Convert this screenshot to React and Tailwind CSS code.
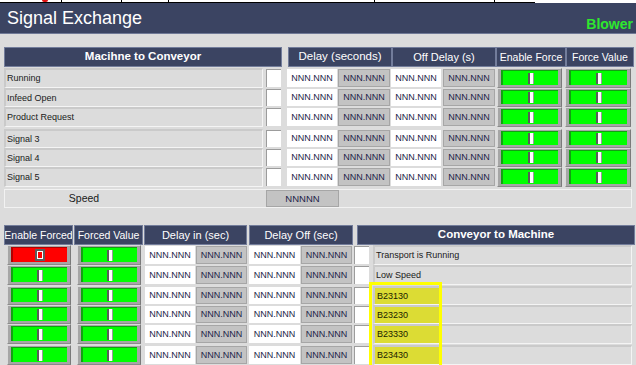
import React from "react";

const topRows = [
  { label: "Running", h: "h-[20px]" },
  { label: "Infeed Open", h: "h-[19px]" },
  { label: "Product Request", h: "h-[20px]" },
  { label: "Signal 3", h: "h-[19px]", gap: true },
  { label: "Signal 4", h: "h-[19px]" },
  { label: "Signal 5", h: "h-[20px]" },
];

const bottomRows = [
  { label: "Transport is Running", h: "h-[20px]", red: true },
  { label: "Low Speed", h: "h-[20px]" },
  { label: "B23130", h: "h-[19px]", gap: true, tag: true },
  { label: "B23230", h: "h-[19px]", tag: true },
  { label: "B23330", h: "h-[20px]", tag: true },
  { label: "B23430", h: "h-[20px]", gap: true, tag: true },
];

const Head = ({ className, bold, children }) => (
  <div
    className={`flex items-center justify-center overflow-hidden whitespace-nowrap bg-[#3b4462] border border-[#737d9b] text-white leading-none ${
      bold ? "font-bold text-[11.5px]" : ""
    } ${className}`}
  >
    {children}
  </div>
);

const Value = ({ gray, className }) => (
  <div
    className={`flex items-center justify-center text-[9px] text-[#1c1c48] leading-none ${
      gray ? "bg-[#c3c3c3] border border-[#a6a6a6]" : "bg-white"
    } ${className}`}
  >
    NNN.NNN
  </div>
);

const Check = ({ className }) => (
  <div className={`bg-white border-t border-l border-[#9c9c9c] ${className}`} />
);

const Label = ({ className, children }) => (
  <div
    className={`flex items-center bg-[#dcdcdc] border-t-2 border-l-2 border-[#cacaca] border-b border-r border-b-[#f4f4f4] border-r-[#f4f4f4] text-[9px] text-[#1a1a1a] leading-none ${className}`}
  >
    {children}
  </div>
);

const Toggle = ({ red, className }) => (
  <div
    className={`flex bg-[#a6a6a6] border-t border-l border-[#dadada] border-r border-b border-r-[#7a7a7a] border-b-[#8a8a8a] pt-[1px] pb-[2px] pl-[3px] pr-[3px] ${className}`}
  >
    <div
      className={`flex-1 flex items-center justify-center border-l-2 border-t ${
        red ? "bg-[#ff0000] border-[#b00000]" : "bg-[#00ff00] border-[#12a012]"
      }`}
    >
      {red ? (
        <div className="w-[10px] h-[12px] border-2 border-[#5c5c5c] bg-white p-[1px]">
          <div className="w-full h-full bg-[#ff0000]" />
        </div>
      ) : (
        <div className="w-[6px] h-[11px] bg-white border-l-2 border-l-[#5a5a5a] border-r border-r-[#9a9a9a]" />
      )}
    </div>
  </div>
);

export default function App() {
  return (
    <div className="relative w-[636px] h-[365px] overflow-hidden bg-[#dcdcdc] font-['Liberation_Sans',Arial,sans-serif]">
      {/* strip of the table above */}
      <div className="flex h-[3px] bg-white">
        <div className="flex w-[535px] border-b border-black">
          <div className="w-[62px] border-r border-black relative">
            <div className="absolute left-[42px] top-0 w-[6px] h-[2px] bg-[#e01010] rounded-b-full" />
          </div>
          <div className="w-[60px] border-r border-black" />
          <div className="w-[47px] border-r border-black" />
          <div className="w-[206px] border-r border-black" />
          <div className="w-[120px] border-r border-black" />
        </div>
      </div>

      {/* title bar */}
      <div className="flex h-[31px] items-center justify-between bg-[#3b4462] border-b border-[#6f7996] pl-[7px] pr-[3px]">
        <span className="text-[18px] text-white leading-none">Signal Exchange</span>
        <span className="text-[14px] font-bold text-[#2ee82e] leading-none mt-[12px]">Blower</span>
      </div>

      {/* Machine to conveyor */}
      <div className="flex h-[20px] mt-[13px] ml-[4px]">
        <Head bold className="w-[278px]">Macihne to Conveyor</Head>
        <Head className="ml-[6px] w-[104px] text-[11.5px]">Delay (seconds)</Head>
        <Head className="w-[104px] text-[11px]">Off Delay (s)</Head>
        <Head className="w-[70px] text-[10.5px]">Enable Force</Head>
        <Head className="w-[68px] text-[10.5px]">Force Value</Head>
      </div>

      <div className="mt-[1px]">
        {topRows.map((r) => (
          <div key={r.label} className={`flex ${r.h} ${r.gap ? "mt-[2px]" : ""}`}>
            <Label className="ml-[4px] w-[259px] pl-[1px]">{r.label}</Label>
            <Check className="ml-[3px] w-[15px] my-[1px]" />
            <Value className="ml-[6px] w-[50px] my-[1px]" />
            <Value gray className="ml-[1px] w-[52px] my-[1px]" />
            <Value className="ml-[1px] w-[50px] my-[1px]" />
            <Value gray className="ml-[2px] w-[52px] my-[1px]" />
            <Toggle className="ml-[2px] w-[65px]" />
            <Toggle className="ml-[3px] w-[66px]" />
          </div>
        ))}
      </div>

      <div className="flex h-[19px] mt-[2px] ml-[4px] w-[628px] bg-[#dcdcdc] border border-[#f2f2f2]">
        <div className="w-[158px] flex items-center justify-center text-[10.5px] text-[#1a1a1a] leading-none">
          Speed
        </div>
        <div className="ml-[103px] w-[73px] flex items-center justify-center bg-[#c3c3c3] border border-[#a6a6a6] text-[9.5px] text-[#1c1c48] leading-none">
          NNNNN
        </div>
      </div>

      {/* Conveyor to machine */}
      <div className="flex h-[20px] mt-[17px] ml-[4px]">
        <Head className="w-[69px] text-[10.5px]">Enable Forced</Head>
        <Head className="ml-[1px] w-[69px] text-[10.5px]">Forced Value</Head>
        <Head className="ml-[1px] w-[103px] text-[11px]">Delay in (sec)</Head>
        <Head className="ml-[2px] w-[104px] text-[11px]">Delay Off (sec)</Head>
        <Head bold className="ml-[4px] w-[278px]">Conveyor to Machine</Head>
      </div>

      <div>
        {bottomRows.map((r) => (
          <div key={r.label} className={`flex ${r.h} ${r.gap ? "mt-[1px]" : ""}`}>
            <Toggle red={r.red} className="ml-[7px] w-[64px]" />
            <Toggle className="ml-[6px] w-[64px]" />
            <Value className="ml-[4px] w-[50px] my-[1px]" />
            <Value gray className="ml-[1px] w-[51px] my-[1px]" />
            <Value className="ml-[2px] w-[51px] my-[1px]" />
            <Value gray className="ml-[1px] w-[51px] my-[1px]" />
            <Check className="ml-[2px] w-[15px] my-[1px]" />
            <Label className="ml-[4px] w-[259px]">
              {r.tag ? (
                <div className="w-[66px] h-full flex items-center pl-[2px] bg-[#dcdc34] text-[#1a1a00]">
                  {r.label}
                </div>
              ) : (
                <span className="pl-[1px]">{r.label}</span>
              )}
            </Label>
          </div>
        ))}
      </div>

      {/* yellow highlight over the tag cells */}
      <div className="absolute left-[369px] top-[282px] w-[73px] h-[90px] border-[3px] border-[#ffff00] pointer-events-none" />
    </div>
  );
}
